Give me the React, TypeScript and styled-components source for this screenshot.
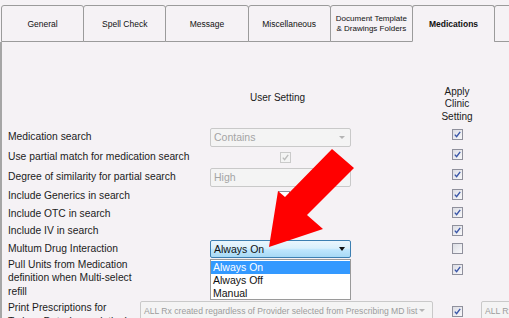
import React from "react"
import styled, { createGlobalStyle } from "styled-components"

const GlobalStyle = createGlobalStyle`
  html, body {
    margin: 0;
    padding: 0;
  }
  body {
    background: #f5f2f5;
    font-family: "Liberation Sans", Arial, sans-serif;
    color: #1a1a1a;
    overflow: hidden;
  }
`

const tabs = [
  "General",
  "Spell Check",
  "Message",
  "Miscellaneous",
  "Document Template & Drawings Folders",
  "Medications",
  "",
]

const App = () => {
  return (
    <Page>
      <GlobalStyle />
      <TabBar>
        {tabs.map((t, i) => (
          <Tab key={i} $active={t === "Medications"} $small={t.length > 20}>
            {t}
          </Tab>
        ))}
      </TabBar>
      <Panel>
        <HeaderRow>
          <UserHead>User Setting</UserHead>
          <ApplyHead>
            Apply
            <br />
            Clinic
            <br />
            Setting
          </ApplyHead>
        </HeaderRow>

        <Row $h={20}>
          <Label>Medication search</Label>
          <Select $disabled>
            Contains
            <Caret />
          </Select>
          <span />
          <ApplyCell $up={3}>
            <CheckBox $checked />
          </ApplyCell>
        </Row>

        <Row $h={20}>
          <Label>Use partial match for medication search</Label>
          <InlineCheck>
            <CheckBox $checked $disabled />
          </InlineCheck>
          <span />
          <ApplyCell $up={3}>
            <CheckBox $checked />
          </ApplyCell>
        </Row>

        <Row $h={20}>
          <Label>Degree of similarity for partial search</Label>
          <Select $disabled>High</Select>
          <span />
          <ApplyCell $up={3}>
            <CheckBox $checked />
          </ApplyCell>
        </Row>

        <Row $h={18}>
          <Label>Include Generics in search</Label>
          <InlineCheck $offset={68}>
            <CheckBox $white />
          </InlineCheck>
          <span />
          <ApplyCell $up={2}>
            <CheckBox $checked />
          </ApplyCell>
        </Row>

        <Row $h={17}>
          <Label>Include OTC in search</Label>
          <span />
          <span />
          <ApplyCell $up={1}>
            <CheckBox $checked />
          </ApplyCell>
        </Row>

        <Row $h={17}>
          <Label>Include IV in search</Label>
          <span />
          <span />
          <ApplyCell>
            <CheckBox $checked />
          </ApplyCell>
        </Row>

        <Row $h={20}>
          <Label>Multum Drug Interaction</Label>
          <DropWrap>
            <Select $active>
              Always On
              <Caret $dark />
            </Select>
            <OptionList>
              <OptionItem $selected>Always On</OptionItem>
              <OptionItem>Always Off</OptionItem>
              <OptionItem>Manual</OptionItem>
            </OptionList>
          </DropWrap>
          <span />
          <ApplyCell $up={1}>
            <CheckBox />
          </ApplyCell>
        </Row>

        <Row $h={42} $top>
          <Label $narrow>Pull Units from Medication definition when Multi-select refill</Label>
          <span />
          <span />
          <ApplyCell $top={5}>
            <CheckBox $checked />
          </ApplyCell>
        </Row>

        <LastRow>
          <Label $narrow $fixed>
            Print Prescriptions for Todays Date (prescription)
          </Label>
          <WideSelect>
            ALL Rx created regardless of Provider selected from Prescribing MD list
            <Caret />
          </WideSelect>
          <LastCheck>
            <CheckBox $checked />
          </LastCheck>
          <WideSelect>ALL Rx created regardless of Provider</WideSelect>
        </LastRow>
      </Panel>

      <ArrowLayer width="509" height="318" viewBox="0 0 509 318">
        <polygon
          points="332,149 354,168 307,215 323,229 269,247 278,191 285,197"
          fill="#ff0000"
        />
      </ArrowLayer>
    </Page>
  )
}

const CheckBox = ({
  $checked,
  $disabled,
  $white,
}: {
  $checked?: boolean
  $disabled?: boolean
  $white?: boolean
}) => (
  <Box $disabled={$disabled} $white={$white}>
    {$checked && (
      <svg width="9" height="9" viewBox="0 0 9 9">
        <path
          d="M1.8 4.6 L3.6 6.6 L7.2 1.8"
          fill="none"
          stroke={$disabled ? "#bcbcbc" : "#3a56a8"}
          strokeWidth="1.4"
        />
      </svg>
    )}
  </Box>
)

const Page = styled.div`
  position: relative;
  width: 509px;
  height: 318px;
  overflow: hidden;
  display: flex;
  flex-direction: column;
`

const TabBar = styled.div`
  display: flex;
  padding: 5px 0 0 1px;
  height: 37px;
  flex: none;
`

const Tab = styled.div<{ $active?: boolean; $small?: boolean }>`
  flex: none;
  box-sizing: border-box;
  width: 83.2px;
  height: 37px;
  margin-right: -1px;
  border: 1px solid #9b9b9b;
  border-bottom-color: ${(p) => (p.$active ? "transparent" : "#9b9b9b")};
  border-radius: 3px 3px 0 0;
  background: #f5f2f5;
  display: flex;
  align-items: center;
  justify-content: center;
  text-align: center;
  font-size: ${(p) => (p.$small ? "8px" : "8.5px")};
  line-height: 10px;
  font-weight: ${(p) => (p.$active ? "bold" : "normal")};
  padding: 0 3px;
  color: #111;
`

const Panel = styled.div`
  flex: 1;
  border-left: 2px solid #a6a6a6;
  padding: 43.75px 0 0 6px;
  display: flex;
  flex-direction: column;
`

const HeaderRow = styled.div`
  display: grid;
  grid-template-columns: 202px 141px 73px 66px;
  height: 37.5px;
  margin-bottom: 3.75px;
  font-size: 10px;
  line-height: 12.5px;
`

const UserHead = styled.div`
  grid-column: 2;
  text-align: center;
  margin-top: 6px;
  margin-left: -6px;
`

const ApplyHead = styled.div`
  grid-column: 4;
  text-align: center;
`

const Row = styled.div<{ $h: number; $top?: boolean }>`
  display: grid;
  grid-template-columns: 202px 141px 73px 66px;
  height: ${(p) => p.$h}px;
  align-items: ${(p) => (p.$top ? "start" : "center")};
`

const Label = styled.div<{ $narrow?: boolean; $fixed?: boolean }>`
  flex: ${(p) => (p.$fixed ? "none" : "initial")};
  width: ${(p) => (p.$fixed ? "132px" : "auto")};
  font-size: 10.3px;
  line-height: 13.5px;
  max-width: ${(p) => (p.$narrow ? "132px" : "none")};
  white-space: ${(p) => (p.$narrow ? "normal" : "nowrap")};
  margin-top: ${(p) => (p.$narrow && !p.$fixed ? "-1.5px" : "0")};
  color: #1c1c1c;
`

const Select = styled.div<{ $disabled?: boolean; $active?: boolean }>`
  box-sizing: border-box;
  height: ${(p) => (p.$active ? "18px" : "19px")};
  width: 141px;
  display: flex;
  align-items: center;
  justify-content: space-between;
  padding: 0 5px 0 3px;
  font-size: 10.5px;
  border-radius: 2px;
  border: 1px solid ${(p) => (p.$active ? "#3c7fb1" : "#c9c9c9")};
  color: ${(p) => (p.$disabled ? "#a4a4a4" : "#111")};
  background: ${(p) =>
    p.$active
      ? "linear-gradient(#eaf6fd 0%, #d9f0fc 45%, #bee6fd 55%, #a7d9f5 100%)"
      : "#f4f4f4"};
`

const Caret = styled.span<{ $dark?: boolean }>`
  width: 0;
  height: 0;
  flex: none;
  border-left: ${(p) => (p.$dark ? "3.5px" : "3px")} solid transparent;
  border-right: ${(p) => (p.$dark ? "3.5px" : "3px")} solid transparent;
  border-top: ${(p) => (p.$dark ? "4px" : "3px")} solid ${(p) => (p.$dark ? "#111" : "#b4b4b4")};
`

const InlineCheck = styled.div<{ $offset?: number }>`
  display: flex;
  padding-left: ${(p) => p.$offset ?? 70}px;
`

const ApplyCell = styled.div<{ $up?: number; $top?: number }>`
  display: flex;
  justify-content: center;
  margin-bottom: ${(p) => (p.$up ?? 0) * 2}px;
  margin-top: ${(p) => p.$top ?? 0}px;
`

const Box = styled.span<{ $disabled?: boolean; $white?: boolean }>`
  box-sizing: border-box;
  width: ${(p) => (p.$white ? "12px" : "11px")};
  height: 11px;
  display: flex;
  align-items: center;
  justify-content: center;
  border: 1px solid ${(p) => (p.$disabled ? "#cacaca" : "#8f909c")};
  background: ${(p) =>
    p.$disabled
      ? "#f4f4f4"
      : p.$white
        ? "#ffffff"
        : "linear-gradient(135deg, #dcdde4, #f8f8fa)"};
`

const DropWrap = styled.div`
  position: relative;
  display: flex;
`

const OptionList = styled.div`
  position: absolute;
  top: calc(100% + 1px);
  left: 0;
  box-sizing: border-box;
  width: 141px;
  height: 41px;
  background: #ffffff;
  border: 1px solid #9a9a9a;
  padding-top: 1px;
  z-index: 2;
`

const OptionItem = styled.div<{ $selected?: boolean }>`
  height: 13px;
  line-height: 13px;
  padding-left: 2px;
  font-size: 10.5px;
  background: ${(p) => (p.$selected ? "#3399ff" : "transparent")};
  color: ${(p) => (p.$selected ? "#ffffff" : "#111")};
`

const LastRow = styled.div`
  display: flex;
  align-items: flex-start;
`

const WideSelect = styled.div`
  flex: none;
  box-sizing: border-box;
  width: 293px;
  height: 19px;
  display: flex;
  align-items: center;
  justify-content: space-between;
  padding: 0 7px 0 3px;
  font-size: 8.6px;
  white-space: nowrap;
  overflow: hidden;
  color: #9c9c9c;
  background: #f4f4f4;
  border: 1px solid #c9c9c9;
  border-radius: 2px;
`

const LastCheck = styled.div`
  flex: none;
  width: 48px;
  display: flex;
  justify-content: center;
  margin-top: 4.5px;
`

const ArrowLayer = styled.svg`
  position: absolute;
  left: 0;
  top: 0;
  pointer-events: none;
  z-index: 5;
`

export default App
